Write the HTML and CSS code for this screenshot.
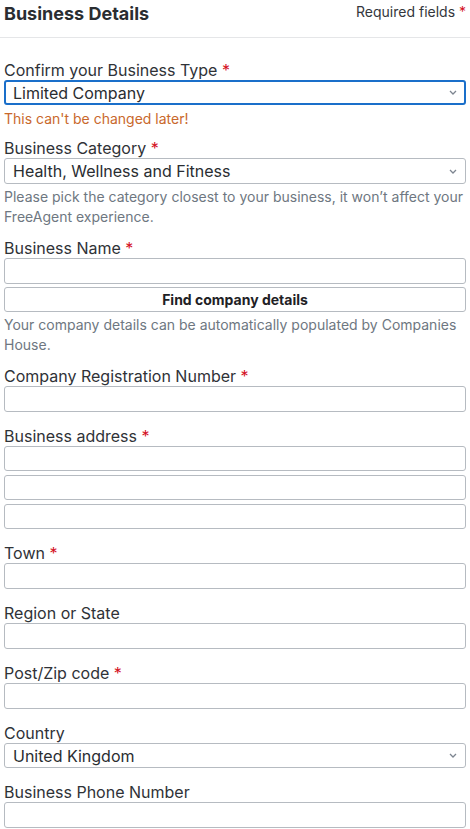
FILE: index.html
```html
<!DOCTYPE html>
<html lang="en">
<head>
<meta charset="utf-8">
<title>Business Details</title>
<link rel="stylesheet" href="styles.css">
</head>
<body>
<div class="page">
  <header class="header">
    <h1 class="title">Business Details</h1>
    <span class="required-note">Required fields <span class="req">*</span></span>
  </header>

  <form class="form">
    <div class="group g-type">
      <label class="label">Confirm your Business Type <span class="req">*</span></label>
      <div class="select focused">
        <span class="select-value">Limited Company</span>
        <svg class="chev" width="8" height="5" viewBox="0 0 8 5"><path d="M1 1l3 3 3-3" fill="none" stroke="#7d8590" stroke-width="1.3"/></svg>
      </div>
      <p class="warn">This can't be changed later!</p>
    </div>

    <div class="group g-help">
      <label class="label">Business Category <span class="req">*</span></label>
      <div class="select">
        <span class="select-value">Health, Wellness and Fitness</span>
        <svg class="chev" width="8" height="5" viewBox="0 0 8 5"><path d="M1 1l3 3 3-3" fill="none" stroke="#7d8590" stroke-width="1.3"/></svg>
      </div>
      <p class="help">Please pick the category closest to your business, it won’t affect your FreeAgent experience.</p>
    </div>

    <div class="group g-help">
      <label class="label">Business Name <span class="req">*</span></label>
      <input class="input" type="text">
      <button class="button" type="button">Find company details</button>
      <p class="help">Your company details can be automatically populated by Companies House.</p>
    </div>

    <div class="group">
      <label class="label">Company Registration Number <span class="req">*</span></label>
      <input class="input" type="text">
    </div>

    <div class="group">
      <label class="label">Business address <span class="req">*</span></label>
      <div class="stack">
        <input class="input short" type="text">
        <input class="input short" type="text">
        <input class="input short" type="text">
      </div>
    </div>

    <div class="group">
      <label class="label">Town <span class="req">*</span></label>
      <input class="input" type="text">
    </div>

    <div class="group">
      <label class="label">Region or State</label>
      <input class="input" type="text">
    </div>

    <div class="group">
      <label class="label">Post/Zip code <span class="req">*</span></label>
      <input class="input" type="text">
    </div>

    <div class="group">
      <label class="label">Country</label>
      <div class="select short">
        <span class="select-value">United Kingdom</span>
        <svg class="chev" width="8" height="5" viewBox="0 0 8 5"><path d="M1 1l3 3 3-3" fill="none" stroke="#7d8590" stroke-width="1.3"/></svg>
      </div>
    </div>

    <div class="group">
      <label class="label">Business Phone Number</label>
      <input class="input" type="text">
    </div>
  </form>
</div>
</body>
</html>
```

FILE: styles.css
```css
* { box-sizing: border-box; }

html, body {
  margin: 0;
  padding: 0;
  background: #ffffff;
}

body {
  font-family: Inter, "Liberation Sans", Arial, sans-serif;
  color: #2f3237;
}

.page {
  width: 470px;
}

.header {
  display: flex;
  justify-content: space-between;
  align-items: flex-start;
  height: 38px;
  padding: 3px 4px 0 4px;
  border-bottom: 1px solid #e5e6e8;
}

.title {
  margin: 0;
  font-size: 18px;
  line-height: 22px;
  font-weight: 700;
  color: #2a2d31;
}

.required-note {
  font-size: 14px;
  line-height: 18px;
  color: #34373c;
}

.req {
  color: #d4101e;
}

.form {
  padding: 22px 4px 0 4px;
}

.group {
  display: flex;
  flex-direction: column;
  margin-bottom: 14px;
}

.group.g-type {
  margin-bottom: 9px;
}

.group.g-help {
  margin-bottom: 11px;
}

.label {
  display: block;
  font-size: 16px;
  line-height: 20px;
  color: #2f3237;
}

.input,
.select,
.button {
  width: 100%;
  height: 26px;
  border: 1px solid #b6bbc1;
  border-radius: 3px;
  background: #ffffff;
  margin: 0;
  font-family: inherit;
}

.input.short,
.select.short {
  height: 25px;
}

.select {
  display: flex;
  align-items: center;
  justify-content: space-between;
  padding: 0 8px 0 8px;
}

.select.focused {
  height: 25px;
  border: 2px solid #1a6fca;
  padding-left: 7px;
  padding-right: 7px;
}

.select-value {
  font-size: 16px;
  color: #2a2d31;
}

.chev {
  display: block;
  flex: none;
}

.stack {
  display: flex;
  flex-direction: column;
  gap: 4px;
}

.button {
  height: 25px;
  margin-top: 3px;
  font-size: 14px;
  font-weight: 700;
  color: #1e2125;
  cursor: pointer;
}

.warn {
  margin: 4px 0 0 0;
  font-size: 14px;
  line-height: 20px;
  color: #c9682c;
}

.help {
  margin: 3px 0 0 0;
  font-size: 14px;
  line-height: 20px;
  color: #6e7781;
}
```
